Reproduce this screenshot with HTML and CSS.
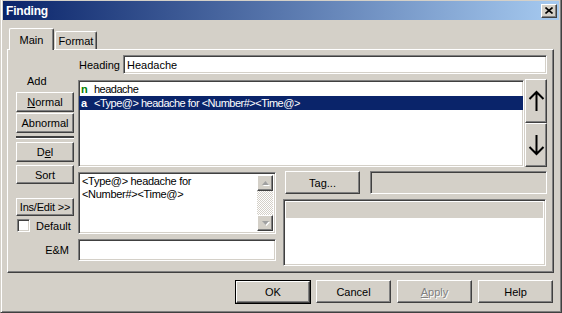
FILE: index.html
```html
<!DOCTYPE html>
<html lang="en">
<head>
    <meta charset="UTF-8">
    <title>Finding</title>
    <link rel="stylesheet" href="styles.css">
</head>
<body>
    <div class="window">
        <div class="titlebar">
            <span class="title">Finding</span>
            <span class="btn close">
                <svg width="8" height="7" viewBox="0 0 8 7"><path d="M0.5 0.5 L7.5 6.5 M7.5 0.5 L0.5 6.5" stroke="#000" stroke-width="1.6" fill="none"/></svg>
            </span>
        </div>

        <div class="dialog">
            <!-- Tabs -->
            <div class="tabs">
                <div class="tab active">Main</div>
                <div class="tab">Format</div>
            </div>

            <div class="panel">
                <div class="heading-row">
                    <span class="heading-label">Heading</span>
                    <div class="field heading-input">Headache</div>
                </div>

                <div class="main">
                    <!-- Left column of buttons -->
                    <div class="side">
                        <div class="add-label">Add</div>
                        <div class="btn b-normal"><u>N</u>ormal</div>
                        <div class="btn b-abnormal">Abnormal</div>
                        <div class="sep"></div>
                        <div class="btn b-del">D<u>e</u>l</div>
                        <div class="btn b-sort">Sort</div>
                        <div class="btn b-ins">Ins/Edit &gt;&gt;</div>
                        <div class="check-row"><span class="checkbox"></span>Default</div>
                        <div class="em-label">E&amp;M</div>
                    </div>

                    <div class="content">
                        <div class="list-row">
                            <div class="field listbox">
                                <div class="item"><b class="kind kind-n">n</b>headache</div>
                                <div class="item selected"><b class="kind">a</b>&lt;Type@&gt; headache for &lt;Number#&gt;&lt;Time@&gt;</div>
                            </div>
                            <div class="movers">
                                <div class="btn mover">
                                    <svg width="17" height="22" viewBox="0 0 17 22"><path d="M8.5 2 V21 M1.5 9 L8.5 2 L15.5 9" stroke="#000" stroke-width="2" fill="none"/></svg>
                                </div>
                                <div class="btn mover">
                                    <svg width="17" height="22" viewBox="0 0 17 22"><path d="M8.5 1 V20 M1.5 13 L8.5 20 L15.5 13" stroke="#000" stroke-width="2" fill="none"/></svg>
                                </div>
                            </div>
                        </div>

                        <div class="lower">
                            <div class="lower-left">
                                <div class="field memo">
                                    <div class="memo-text">&lt;Type@&gt; headache for<br>&lt;Number#&gt;&lt;Time@&gt;</div>
                                    <div class="scrollbar">
                                        <div class="btn sb-btn">
                                            <svg width="7" height="5" viewBox="0 0 7 5"><path d="M3.5 0 L7 4 L0 4 Z" fill="#a0a0a0"/></svg>
                                        </div>
                                        <div class="sb-track"></div>
                                        <div class="btn sb-btn">
                                            <svg width="7" height="5" viewBox="0 0 7 5"><path d="M0 0 L7 0 L3.5 4 Z" fill="#a0a0a0"/></svg>
                                        </div>
                                    </div>
                                </div>
                                <div class="field em-input"></div>
                            </div>

                            <div class="lower-right">
                                <div class="tag-row">
                                    <div class="btn b-tag">Tag...</div>
                                    <div class="field tag-field"></div>
                                </div>
                                <div class="field listview">
                                    <div class="lv-header"></div>
                                </div>
                            </div>
                        </div>
                    </div>
                </div>
            </div>

            <div class="buttons">
                <div class="btn dlg default">OK</div>
                <div class="btn dlg">Cancel</div>
                <div class="btn dlg disabled"><u>A</u>pply</div>
                <div class="btn dlg">Help</div>
            </div>
        </div>
    </div>
</body>
</html>
```

FILE: styles.css
```css
body { margin: 0; background: #d4d0c8; font: 11px "Liberation Sans", Arial, sans-serif; color: #000; }

.window {
    width: 562px; height: 313px; box-sizing: border-box;
    border-left: 1px solid #d4d0c8; border-right: 1px solid #404040; border-bottom: 1px solid #404040;
    box-shadow: inset 1px 0 #fff, inset -1px -1px #808080;
    padding: 1px 2px 0 2px;
}
.titlebar {
    height: 19px; display: flex; align-items: center; padding: 0 2px 0 3px;
    background: linear-gradient(to right, #0a246a, #a6caf0);
}
.title { color: #fff; font-weight: bold; font-size: 12px; letter-spacing: -0.2px; }

/* generic raised button and sunken field */
.btn {
    box-sizing: border-box; display: flex; align-items: center; justify-content: center;
    background: #d4d0c8; border: 1px solid; border-color: #fff #404040 #404040 #fff;
    box-shadow: inset -1px -1px #808080;
}
.field {
    box-sizing: border-box; background: #fff; border: 1px solid; border-color: #808080 #fff #fff #808080;
    box-shadow: inset 1px 1px #404040, inset -1px -1px #d4d0c8;
}
.close { width: 16px; height: 14px; margin-left: auto; }

.dialog { padding: 0 5px 0 4px; }

.tabs { display: flex; align-items: flex-end; height: 22px; margin-top: 8px; padding-left: 2px; margin-bottom: -1px; position: relative; z-index: 1; }
.tab {
    box-sizing: border-box; background: #d4d0c8; border: 1px solid; border-bottom: none;
    border-color: #fff #404040 #fff #fff; box-shadow: inset -1px 0 #808080;
    border-radius: 2px 2px 0 0; display: flex; align-items: center; justify-content: center;
    width: 42px; height: 18px; margin: 0 0 1px 1px; padding-top: 1px;
}
.tab.active { width: 45px; height: 22px; margin: 0; padding-top: 0; }

.panel {
    box-sizing: border-box; height: 224px; border: 1px solid; border-color: #fff #404040 #404040 #fff;
    box-shadow: inset -1px -1px #808080; padding: 5px 6px 0 8px;
}
.heading-row { display: flex; justify-content: flex-end; align-items: center; height: 19px; }
.heading-label { margin-right: 3px; }
.heading-input { width: 424px; height: 19px; padding: 2px 0 0 3px; line-height: 14px; }

.main { display: grid; grid-template-columns: 58px 1fr; column-gap: 4px; }

.side { display: flex; flex-direction: column; }
.add-label { height: 13px; line-height: 13px; margin-top: 1px; padding-left: 11px; }
.side .btn { height: 20px; margin-top: 3px; }
.side .b-normal { margin-top: 4px; }
.side .b-abnormal { margin-top: 1px; }
.side .b-sort { height: 19px; }
.side .b-ins { height: 18px; margin-top: 14px; letter-spacing: -0.2px; }
.sep { margin-top: 3px; border-top: 2px solid #404040; border-bottom: 1px solid #fff; }
.check-row { display: flex; align-items: center; height: 13px; margin-top: 3px; padding-left: 1px; }
.checkbox {
    width: 13px; height: 13px; box-sizing: border-box; background: #fff; margin-right: 6px;
    border: 1px solid; border-color: #808080 #fff #fff #808080; box-shadow: inset 1px 1px #404040, inset -1px -1px #d4d0c8;
}
.em-label { height: 13px; line-height: 13px; margin-top: 12px; text-align: right; padding-right: 5px; }

.list-row { display: flex; gap: 1px; height: 88px; margin-top: 5px; }
.listbox { width: 446px; height: 87px; margin-top: 1px; padding: 1px 0 0; }
.item { height: 14px; line-height: 14px; padding-left: 2px; display: flex; white-space: nowrap; letter-spacing: -0.5px; }
.item.selected { background: #0a246a; color: #fff; }
.kind { width: 13px; font-weight: bold; letter-spacing: 0; }
.kind-n { color: #008000; }
.movers { display: flex; flex-direction: column; width: 22px; }
.mover { flex: 1; }

.lower { display: grid; grid-template-columns: 198px 1fr; column-gap: 7px; margin-top: 4px; }
.lower-left { display: flex; flex-direction: column; }
.memo { height: 62px; margin-top: 1px; display: flex; padding: 2px 2px 2px 3px; }
.memo-text { flex: 1; line-height: 13px; letter-spacing: -0.3px; }
.scrollbar { width: 16px; display: flex; flex-direction: column; }
.sb-btn { height: 16px; }
.sb-btn svg { filter: drop-shadow(1px 1px 0 #fff); }
.sb-track { flex: 1; background: repeating-conic-gradient(#fff 0 25%, #d4d0c8 0 50%) 0 0 / 2px 2px; }
.em-input { height: 22px; margin-top: 5px; }

.lower-right { display: flex; flex-direction: column; }
.tag-row { display: flex; height: 23px; }
.b-tag { width: 75px; margin-left: 2px; }
.tag-field { flex: 1; margin-left: 10px; background: #d4d0c8; }
.listview { height: 67px; margin-top: 5px; margin-right: 1px; padding: 2px; }
.lv-header { height: 16px; background: #d4d0c8; }

.buttons { display: flex; justify-content: flex-end; gap: 6px; margin-top: 7px; padding-right: 1px; }
.dlg { width: 75px; height: 23px; }
.dlg.default { outline: 1px solid #000; width: 74px; height: 22px; margin-top: 1px; margin-left: 1px; }
.dlg.disabled { color: #808080; text-shadow: 1px 1px 0 #fff; }
```
